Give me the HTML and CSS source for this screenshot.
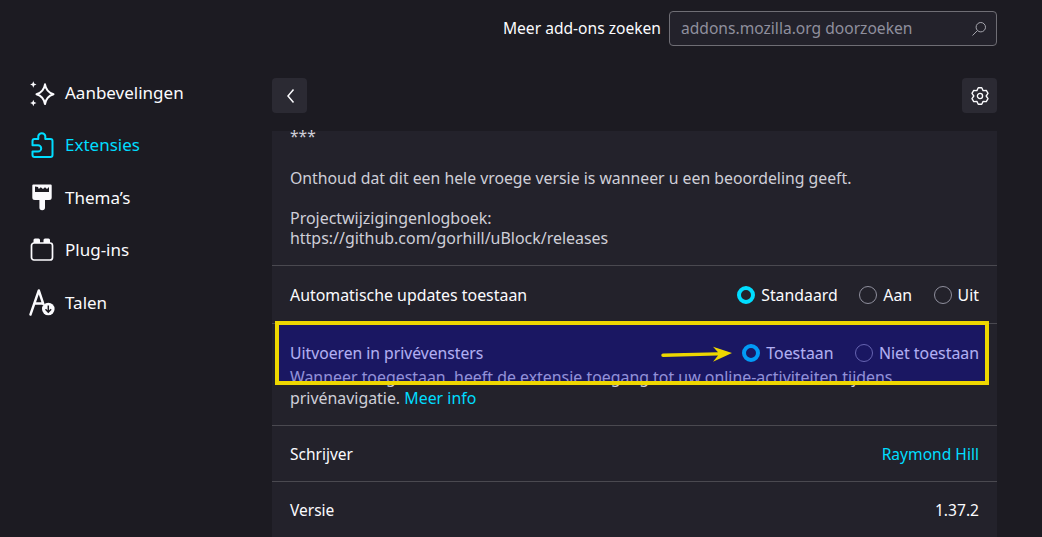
FILE: index.html
```html
<!DOCTYPE html>
<html lang="nl">
<head>
<meta charset="utf-8">
<title>Add-ons</title>
<link rel="stylesheet" href="styles.css">
</head>
<body>
<div class="page">
  <nav class="sidebar">
    <a class="nav-item">
      <svg class="nav-icon" viewBox="0 0 26 28"><path class="ln star" d="M16 5.300C16.800 10.500 19 13.500 24.500 15.200C19 16.900 16.800 19.900 16 25.100C15.200 19.900 13 16.900 7.500 15.200C13 13.500 15.200 10.500 16 5.300Z"/><path class="fl" d="M4.300 2.300L5.200 4.600L7.500 5.500L5.200 6.400L4.300 8.700L3.400 6.400L1.100 5.500L3.400 4.600ZM4.300 20.800L5.200 23.100L7.500 24L5.200 24.900L4.300 27.200L3.400 24.900L1.100 24L3.400 23.100Z"/></svg>
      <span class="nav-label">Aanbevelingen</span>
    </a>
    <a class="nav-item active">
      <svg class="nav-icon" viewBox="0 0 26 28"><path class="ln star" d="M5.500 26H21.500A2 2 0 0 0 23.500 24V10A2 2 0 0 0 21.500 8H16.300V5A3.600 3.600 0 0 0 9.300 5V8H5.500A2 2 0 0 0 3.500 10V14.200H9A3.200 3.200 0 0 1 9 20.600H3.500V24A2 2 0 0 0 5.500 26Z"/></svg>
      <span class="nav-label">Extensies</span>
    </a>
    <a class="nav-item">
      <svg class="nav-icon" viewBox="0 0 26 28"><path class="fl" d="M4.300 0.500H21.700A1 1 0 0 1 22.700 1.500V13.500A2.500 2.500 0 0 1 20.200 16H16V23.500A2.800 2.800 0 0 1 10.400 23.500V16H5.800A2.500 2.500 0 0 1 3.300 13.500V1.500A1 1 0 0 1 4.300 0.500Z"/><path class="notch" d="M6 2.600L9 3.100L9.800 5L11.800 3.300L14 5L16 3.300L18 5L20 3L20 8H6Z"/></svg>
      <span class="nav-label">Thema’s</span>
    </a>
    <a class="nav-item">
      <svg class="nav-icon" viewBox="0 0 26 28"><rect class="ln" x="2.500" y="7" width="21" height="17" rx="2.500"/><path class="fl" d="M4.500 7V4A1.500 1.500 0 0 1 6 2.500H9.500A1.500 1.500 0 0 1 11 4V7ZM14.500 7V4A1.500 1.500 0 0 1 16 2.500H19.500A1.500 1.500 0 0 1 21 4V7Z"/></svg>
      <span class="nav-label">Plug-ins</span>
    </a>
    <a class="nav-item">
      <svg class="nav-icon" viewBox="0 0 26 28"><path class="ln thick" d="M1.500 25.500L9.800 1.500L14.300 15M6.800 14.500H14"/><circle class="fl" cx="19.300" cy="20" r="6.300"/><path class="cut" d="M19.300 16.500V23M16.500 20.300L19.300 23.200L22.100 20.300"/></svg>
      <span class="nav-label">Talen</span>
    </a>
  </nav>
  <main class="content">
    <header class="search-bar">
      <label class="search-label">Meer add-ons zoeken</label>
      <div class="search-box">
        <span class="search-text">addons.mozilla.org doorzoeken</span>
        <svg class="search-icon" viewBox="0 0 16 16"><circle cx="9.800" cy="6.200" r="4.700"/><path d="M6.400 9.600L1.500 14.500"/></svg>
      </div>
    </header>
    <div class="toolbar">
      <button class="tool-btn"><svg class="back" viewBox="0 0 12 16"><path d="M9.500 1.500L4 8L9.500 14.500"/></svg></button>
      <button class="tool-btn"><svg class="gear" viewBox="0 0 16 16"><path d="M6.440 0.660L9.560 0.660L10.750 3.240L13.570 2.980L15.130 5.680L13.500 8L15.130 10.320L13.570 13.020L10.750 12.760L9.560 15.340L6.440 15.340L5.250 12.760L2.430 13.020L0.870 10.320L2.500 8L0.870 5.680L2.430 2.980L5.250 3.240Z"/><circle cx="8" cy="8" r="2.300"/></svg></button>
    </div>
    <section class="card">
      <div class="description">
        <p class="stars">***</p>
        <p class="notice">Onthoud dat dit een hele vroege versie is wanneer u een beoordeling geeft.</p>
        <p class="changelog">Projectwijzigingenlogboek:<br>https://github.com/gorhill/uBlock/releases</p>
      </div>
      <div class="row row-updates">
        <span class="title-updates">Automatische updates toestaan</span>
        <div class="radios">
          <span class="radio-opt"><i class="radio on"></i>Standaard</span>
          <span class="radio-opt"><i class="radio"></i>Aan</span>
          <span class="radio-opt"><i class="radio"></i>Uit</span>
        </div>
      </div>
      <div class="row-private">
        <div class="row-private-top">
          <span class="title-private">Uitvoeren in privévensters</span>
          <div class="radios">
            <span class="radio-opt"><i class="radio on"></i>Toestaan</span>
            <span class="radio-opt"><i class="radio"></i>Niet toestaan</span>
          </div>
        </div>
        <p class="help">Wanneer toegestaan, heeft de extensie toegang tot uw online-activiteiten tijdens privénavigatie. <a class="link">Meer info</a></p>
        <div class="highlight">
          <svg class="arrow" viewBox="0 0 72 16"><path d="M2 7.500L57 6.300L52 0.700L71 7L52 15.700L57 9.500L2 11A1.750 1.750 0 0 1 2 7.500Z"/></svg>
        </div>
      </div>
      <div class="row row-simple">
        <span class="title-simple">Schrijver</span>
        <a class="link">Raymond Hill</a>
      </div>
      <div class="row row-simple">
        <span class="title-simple">Versie</span>
        <span>1.37.2</span>
      </div>
    </section>
  </main>
</div>
</body>
</html>
```
FILE: styles.css
```css
* { box-sizing: border-box; }
html, body { margin: 0; height: 100%; overflow: hidden; }
body {
  background: #1c1b22;
  color: #fbfbfe;
  font-family: "Noto Sans", sans-serif;
  font-size: 15.6px;
  line-height: 20px;
}
p { margin: 0; }
.page { display: flex; height: 537px; overflow: hidden; }
.sidebar { width: 272px; flex: none; padding: 66.5px 0 0 29px; }
.nav-item { display: flex; align-items: center; gap: 10px; height: 52.5px; }
.nav-label { font-size: 17px; }
.nav-item.active { color: #00ddff; }
.nav-icon { width: 26px; height: 28px; flex: none; }
.ln { fill: none; stroke: currentColor; stroke-width: 1.7; stroke-linejoin: round; stroke-linecap: round; }
.ln.star { stroke-width: 2; }
.ln.thick { stroke-width: 2.4; }
.fl { fill: currentColor; }
.notch { fill: #1c1b22; }
.cut { fill: none; stroke: #1c1b22; stroke-width: 1.5; }
.content { width: 725px; flex: none; }
.search-bar { display: flex; justify-content: flex-end; align-items: center; gap: 8px; height: 57px; }
.search-label { margin-bottom: 2px; }
.search-box { width: 328px; height: 35px; display: flex; align-items: center; justify-content: space-between; padding: 0 9px 0 11px; background: #23222b; border: 1px solid #6f6e75; border-radius: 4px; color: #8f8f9d; }
.search-text { margin-bottom: 2px; }
.search-icon { width: 16px; height: 16px; fill: none; stroke: #a5a5ad; stroke-width: 1; }
.toolbar { display: flex; justify-content: space-between; padding-top: 21px; height: 74px; }
.tool-btn { width: 35px; height: 35px; padding: 0; border: 0; border-radius: 4px; background: #2b2a33; color: #fbfbfe; display: flex; align-items: center; justify-content: center; }
.back { width: 12px; height: 16px; fill: none; stroke: #fbfbfe; stroke-width: 1.5; }
.gear { width: 18px; height: 18px; fill: none; stroke: #fbfbfe; stroke-width: 1.2; stroke-linejoin: round; }
.card { background: #23222b; height: 406px; padding: 0 18px; }
.description { height: 135px; margin: 0 -18px; padding: 0 18px; color: #cfcfd8; border-bottom: 1px solid #4a4950; }
.stars { height: 37px; line-height: 11px; }
.notice { height: 40px; font-size: 15.8px; }
.changelog { font-size: 15.95px; }
.row { display: flex; justify-content: space-between; align-items: center; margin: 0 -18px; padding: 0 18px; }
.row-updates { height: 57px; }
.title-updates { font-size: 15.9px; }
.title-private { font-size: 15.7px; }
.title-simple { font-size: 15.5px; }
.row-simple { height: 56px; border-top: 1px solid #4a4950; }
.radios { display: flex; gap: 21.5px; font-size: 15.85px; }
.radio-opt { display: flex; align-items: center; gap: 6px; }
.radio { width: 18px; height: 18px; flex: none; border-radius: 50%; border: 1px solid #8f8f9d; }
.radio.on { border: 4.5px solid #00ddff; }
.row-private { position: relative; height: 102px; margin: 0 -18px; padding: 0 18px; border-top: 1px solid #4a4950; }
.row-private-top { display: flex; justify-content: space-between; align-items: center; height: 43px; padding-top: 14px; }
.help { width: 640px; font-size: 15.9px; line-height: 21px; color: #cfcfd8; }
.link { color: #00ddff; }
.highlight { position: absolute; left: 3px; top: -3px; width: 714px; height: 64px; border: 4px solid #eed700; background: rgba(8, 1, 226, 0.3); }
.arrow { position: absolute; left: 382px; top: 21px; width: 72px; height: 16px; fill: #eed700; }
```
